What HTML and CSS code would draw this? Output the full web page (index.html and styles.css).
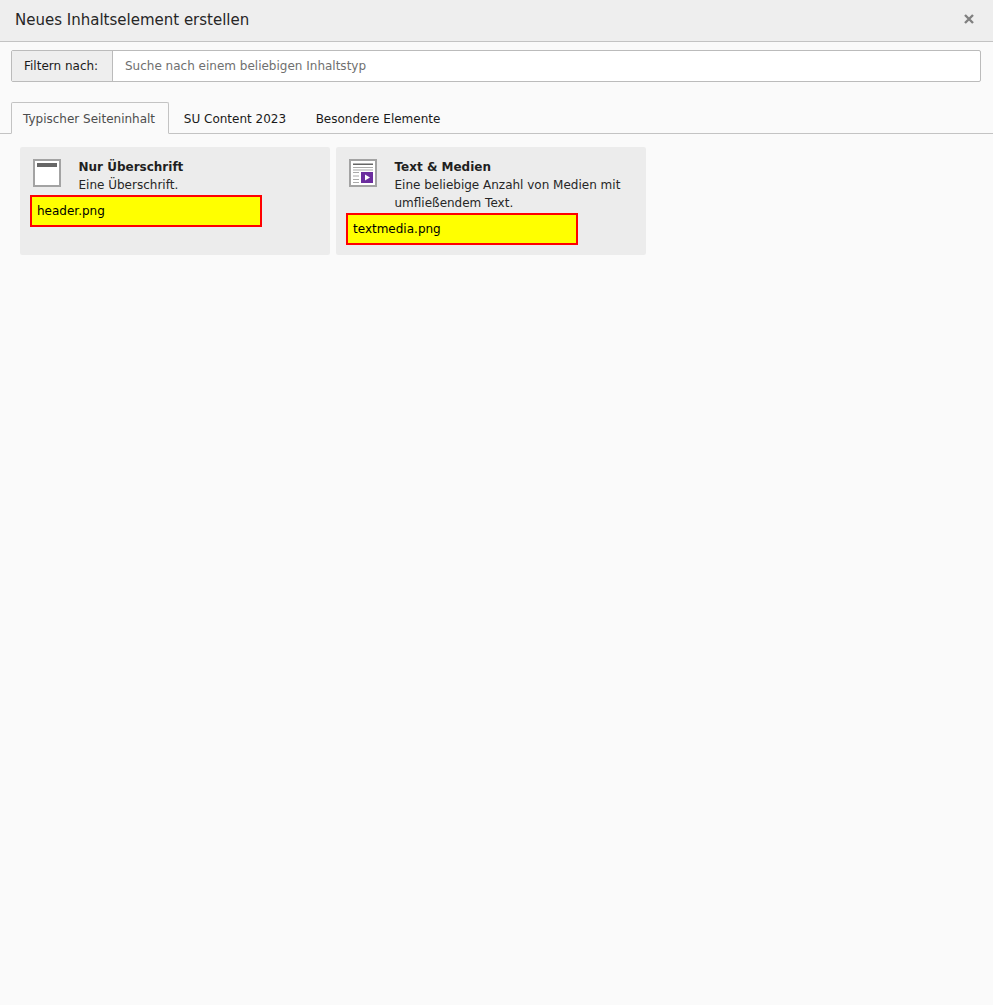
FILE: index.html
```html
<!DOCTYPE html>
<html lang="de">
<head>
<meta charset="utf-8">
<title>Neues Inhaltselement erstellen</title>
<link rel="stylesheet" href="styles.css">
</head>
<body>
<header class="head">
  <h1 class="title">Neues Inhaltselement erstellen</h1>
  <svg class="close" viewBox="0 0 10 10" width="10" height="10" aria-label="Schließen"><path d="M1 1 9 9M9 1 1 9" fill="none" stroke="#808080" stroke-width="2.4"/></svg>
</header>
<main class="content">
  <div class="filter">
    <span class="filter-label">Filtern nach:</span>
    <span class="filter-input">Suche nach einem beliebigen Inhaltstyp</span>
  </div>
  <nav class="tabs">
    <span class="tab active">Typischer Seiteninhalt</span>
    <span class="tab">SU Content 2023</span>
    <span class="tab">Besondere Elemente</span>
  </nav>
  <section class="cards">
    <article class="card">
      <div class="card-top">
        <svg class="icon" viewBox="0 0 28 28" width="28" height="28">
          <rect x="0" y="0" width="28" height="28" fill="#a3a3a3"/>
          <rect x="2" y="2" width="24" height="24" fill="#fff"/>
          <rect x="4" y="4" width="20" height="4" fill="#666"/>
        </svg>
        <div class="card-text">
          <div class="card-title">Nur Überschrift</div>
          <div class="card-desc">Eine Überschrift.</div>
        </div>
      </div>
      <div class="marker">header.png</div>
    </article>
    <article class="card">
      <div class="card-top">
        <svg class="icon" viewBox="0 0 28 28" width="28" height="28">
          <rect x="0" y="0" width="28" height="28" fill="#a3a3a3"/>
          <rect x="2" y="2" width="24" height="24" fill="#fff"/>
          <rect x="4" y="4.5" width="20" height="1.5" fill="#666"/>
          <rect x="4" y="8" width="20" height="1" fill="#aaa"/>
          <rect x="4" y="10.5" width="20" height="1" fill="#aaa"/>
          <rect x="4" y="13" width="6" height="1" fill="#aaa"/>
          <rect x="4" y="16.5" width="6" height="1" fill="#aaa"/>
          <rect x="4" y="20" width="6" height="1" fill="#aaa"/>
          <rect x="4" y="23" width="6" height="1" fill="#aaa"/>
          <rect x="12" y="13" width="12" height="11" fill="#6b2d9e"/>
          <path d="M16 15.5 21 18.5 16 21.5Z" fill="#fff"/>
        </svg>
        <div class="card-text">
          <div class="card-title">Text &amp; Medien</div>
          <div class="card-desc">Eine beliebige Anzahl von Medien mit umfließendem Text.</div>
        </div>
      </div>
      <div class="marker">textmedia.png</div>
    </article>
  </section>
</main>
</body>
</html>
```

FILE: styles.css
```css
* { box-sizing: border-box; }
html, body { height: 100%; }
body {
  margin: 0;
  background: #fafafa;
  color: #1a1a1a;
  font-family: "DejaVu Sans", Verdana, sans-serif;
  font-size: 12px;
  line-height: 18px;
}
.head {
  height: 42px;
  padding: 0 19px 0 15px;
  display: flex;
  align-items: center;
  justify-content: space-between;
  background: #eeeeee;
  border-bottom: 1px solid #c3c3c3;
}
.title {
  margin: -2px 0 0;
  font-size: 15px;
  font-weight: 400;
  line-height: 20px;
  color: #262626;
}
.close { display: block; margin-top: -4px; }
.content { padding: 8px 12px 0 11px; }
.filter {
  height: 32px;
  display: flex;
  border: 1px solid #bbbbbb;
  border-radius: 2px;
  background: #fff;
}
.filter-label {
  width: 101px;
  padding: 0 0 0 12px;
  display: flex;
  align-items: center;
  background: #eeeeee;
  border-right: 1px solid #bbbbbb;
}
.filter-input {
  flex: 1;
  padding-left: 12px;
  display: flex;
  align-items: center;
  color: #6f6f6f;
}
.tabs {
  display: flex;
  margin: 20px -12px 0 -11px;
  padding-left: 11px;
  height: 32px;
  border-bottom: 1px solid #c3c3c3;
}
.tab {
  height: 32px;
  padding: 7px 13.75px 0;
  border: 1px solid transparent;
  border-bottom: 0;
}
.tab.active {
  padding: 7px 13px 0 11px;
  background: #fafafa;
  border-color: #c3c3c3;
  border-bottom: 1px solid #fafafa;
  border-radius: 2px 2px 0 0;
  color: #4d4d4d;
}
.cards {
  display: flex;
  gap: 6px;
  margin: 13px 0 0 9px;
}
.card {
  width: 310px;
  height: 108px;
  padding: 11px 10px 0;
  background: #ececec;
  border-radius: 2px;
}
.card-top {
  display: flex;
  padding-left: 3px;
  margin-bottom: 1px;
}
.icon { flex: none; margin-top: 1px; }
.card-text { margin-left: 17.5px; }
.card-title { font-weight: 700; color: #1f1f1f; }
.card-desc { color: #262626; }
.marker {
  width: 232px;
  height: 32px;
  padding-left: 5px;
  display: flex;
  align-items: center;
  background: #ffff00;
  border: 2px solid #ff0000;
  color: #000;
}
```
